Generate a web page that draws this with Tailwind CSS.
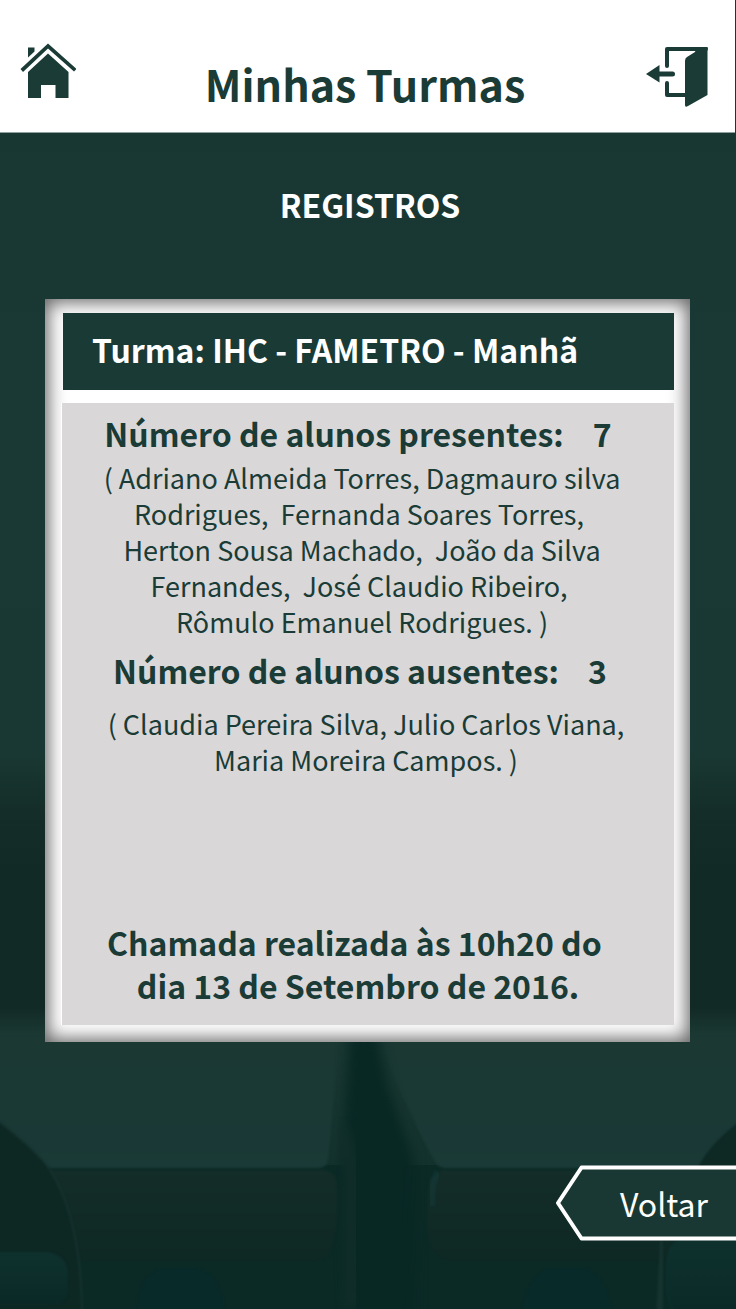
<!DOCTYPE html>
<html lang="pt-BR">
<head>
<meta charset="utf-8">
<meta name="viewport" content="width=device-width, initial-scale=1">
<title>Minhas Turmas</title>
<script src="https://cdn.jsdelivr.net/npm/@tailwindcss/browser@4"></script>
</head>
<body class="relative isolate flex min-h-screen flex-col bg-[#1a3833] font-['Noto_Sans_CJK_SC',sans-serif] text-[#1a3b36]">
  <!-- Classroom backdrop -->
  <svg class="absolute inset-0 -z-10 h-full w-full" viewBox="0 0 736 1309" preserveAspectRatio="none" aria-hidden="true">
    <defs>
      <linearGradient id="wall" x1="0" y1="0" x2="0" y2="1">
        <stop offset="0" stop-color="#193631"/>
        <stop offset=".3" stop-color="#1a3934"/>
        <stop offset=".575" stop-color="#1a3833"/>
        <stop offset=".62" stop-color="#142d28"/>
        <stop offset=".67" stop-color="#112a26"/>
        <stop offset=".77" stop-color="#122a26"/>
        <stop offset=".79" stop-color="#1b3833"/>
        <stop offset="1" stop-color="#0b2a26"/>
      </linearGradient>
      <linearGradient id="desk" x1="0" y1="0" x2="0" y2="1">
        <stop offset="0" stop-color="#1b3833"/>
        <stop offset="1" stop-color="#1a3a37"/>
      </linearGradient>
      <linearGradient id="front" x1="0" y1="0" x2="0" y2="1">
        <stop offset="0" stop-color="#142d29"/>
        <stop offset="1" stop-color="#0e2824"/>
      </linearGradient>
      <linearGradient id="seat" x1="0" y1="0" x2="0" y2="1">
        <stop offset="0" stop-color="#0f322f"/>
        <stop offset="1" stop-color="#0a2926"/>
      </linearGradient>
      <filter id="soft" x="-40%" y="-20%" width="180%" height="140%" color-interpolation-filters="sRGB"><feGaussianBlur stdDeviation="6"/></filter>
      <filter id="fine" x="-10%" y="-10%" width="120%" height="120%" color-interpolation-filters="sRGB"><feGaussianBlur stdDeviation="1"/></filter>
    </defs>
    <rect width="736" height="1309" fill="url(#wall)"/>
    <path d="M0 1165H736V1309H0Z" fill="#0b2a26"/>
    <path d="M-10 1035H340L328 1160Q326 1168 318 1168H-10Z" fill="url(#desk)" filter="url(#fine)"/>
    <path d="M378 1035H746V1168H445Q438 1168 434 1160Q397 1090 378 1035Z" fill="url(#desk)" filter="url(#fine)"/>
    <path d="M350 1020H374L388 1085L414 1160L415 1330H350L342 1170Z" fill="#082824" filter="url(#soft)"/>
    <path d="M342 1130L352 1170V1309" fill="none" stroke="#122e2a" stroke-width="14" filter="url(#soft)"/>
    <path d="M45 1170H320Q336 1170 337 1185Q339 1220 333 1245Q329 1262 310 1262H80Z" fill="url(#front)" filter="url(#fine)"/>
    <path d="M442 1170H746V1262H455Q436 1262 430 1245Q423 1220 430 1180Z" fill="url(#front)" filter="url(#fine)"/>
    <path d="M438 1172Q430 1185 432 1206" fill="none" stroke="#164141" stroke-width="7" filter="url(#fine)" opacity=".4"/>
    <path d="M-10 1115Q35 1148 50 1170Q82 1220 82 1320H-10Z" fill="#0d2723" stroke="#16332f" stroke-width="2" filter="url(#fine)"/>
    <path d="M746 1117Q710 1142 698 1168H746Z" fill="#0e2824" filter="url(#fine)"/>
    <path d="M660 1240H663V1320H656Z" fill="#16332f" filter="url(#fine)"/>
    <path d="M-10 1252H48Q68 1256 68 1275V1292Q66 1305 48 1305H-10Z" fill="url(#seat)" filter="url(#fine)"/>
    <path d="M746 1238H685Q667 1242 667 1262V1290Q670 1320 690 1320H746Z" fill="url(#seat)" stroke="#0e3432" filter="url(#fine)"/>
    <path d="M134 1320Q140 1268 165 1268H195Q220 1268 226 1320Z M520 1320Q528 1268 553 1268H580Q606 1268 614 1320Z" fill="#082a29" filter="url(#fine)"/>
  </svg>

  <header class="mr-px flex h-[133px] items-start justify-between border-b border-[#8fa19e] bg-white pr-[27px] pl-5">
    <a href="#inicio" aria-label="Início" class="mt-[42px]">
      <svg class="h-14 w-14" viewBox="0 0 56 56" fill="#1a3b36" aria-hidden="true">
        <path d="M8 5.500H14.500V9.500L8 15.500Z"/>
        <path d="M28 1.500L56.500 27L54 29.500L28 6.500L3 30L.5 27Z"/>
        <path d="M28 11.500L48.500 30V56H35.500V43H21V56H8V30Z"/>
      </svg>
    </a>
    <h1 class="pt-12 pl-2 text-[43px] leading-[70px] font-bold">Minhas Turmas</h1>
    <a href="#sair" aria-label="Sair" class="mt-[46px]">
      <svg class="h-[62px] w-[62px]" viewBox="0 0 62 62" fill="none" aria-hidden="true">
        <path d="M21 20V3H60M21 37V49H40" stroke="#1a3b36" stroke-width="4" stroke-linejoin="round" stroke-linecap="round"/>
        <path d="M50 3L49 6L41 11Q39 12 39 15V59Q39 62 42 60L61.500 49V1H48V3Z" fill="#1a3b36"/>
        <path d="M0 28L13.500 19V36.500Z" fill="#1a3b36"/>
        <path d="M12 28H26.500" stroke="#1a3b36" stroke-width="5" stroke-linecap="round"/>
      </svg>
    </a>
  </header>

  <main class="flex flex-1 flex-col">
    <h2 class="mt-[45px] pl-1 text-center text-[32px] leading-[52px] font-bold text-white">REGISTROS</h2>

    <section class="mt-[69px] mr-[46px] ml-[45px] bg-white px-4 pt-[14px] pb-[17px] shadow-[inset_0_0_18px_3px_#000000a0]">
      <h3 class="ml-0.5 bg-[#1a3a36] pb-1 pl-[29px] text-[32px] leading-[73px] font-bold text-white">Turma: IHC - FAMETRO - Manhã</h3>
      <div class="mt-[13px] flex min-h-[622px] flex-col border-l border-white bg-[#d9d7d8] pt-[5px] pb-[18px] text-center">
        <h4 class="pr-5 pb-0.5 text-[32px] leading-[50px] font-bold">Número de alunos presentes: &nbsp;&nbsp;&nbsp;7</h4>
        <p class="pr-3 text-[27px] leading-9">( Adriano Almeida Torres, Dagmauro silva<br>Rodrigues,&nbsp; Fernanda Soares Torres,&nbsp;<br>Herton Sousa Machado,&nbsp; João da Silva<br>Fernandes,&nbsp; José Claudio Ribeiro,&nbsp;<br>Rômulo Emanuel Rodrigues. )</p>
        <h4 class="mt-[5px] pr-4 pb-0.5 text-[32px] leading-[50px] font-bold">Número de alunos ausentes: &nbsp;&nbsp;&nbsp;3</h4>
        <p class="mt-[9px] pr-1 text-[27px] leading-9">( Claudia Pereira Silva, Julio Carlos Viana,<br>Maria Moreira Campos. )</p>
        <p class="mt-auto pr-5 text-[32px] leading-[43px] font-bold">Chamada realizada às 10h20 do&nbsp;<br>dia 13 de Setembro de 2016.</p>
      </div>
    </section>

    <div class="mt-auto mb-[68px] flex justify-end">
      <button type="button" class="relative isolate h-[76px] w-[181px] cursor-pointer pr-7 text-right text-[32px] leading-[74px] text-white">
        <svg class="absolute inset-0 -z-10 h-full w-full" viewBox="0 0 181 76" aria-hidden="true">
          <path d="M185 2.500H26.500L3 38L26.500 73.500H185" fill="#1a3833" stroke="#fff" stroke-width="4" stroke-linejoin="round"/>
        </svg>
        Voltar
      </button>
    </div>
  </main>
</body>
</html>
